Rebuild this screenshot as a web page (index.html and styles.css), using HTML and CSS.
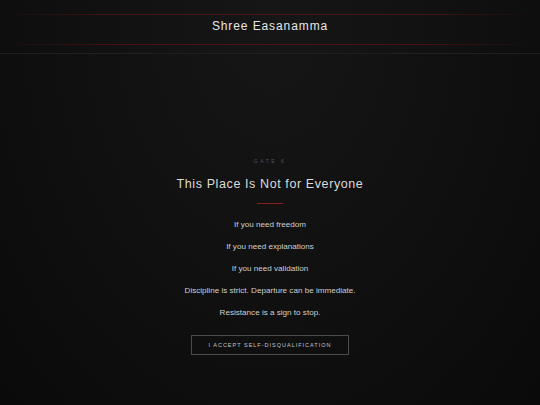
FILE: index.html
```html
<!DOCTYPE html>
<html lang="en">
<head>
  <meta charset="UTF-8" />
  <title>Shree Easanamma — Gate 6</title>
  <link rel="stylesheet" href="styles.css">
</head>
<body>
  <header class="site-header">
    <div class="brand">Shree Easanamma</div>
  </header>

  <main class="gate">
    <p class="gate-label">Gate 6</p>
    <h1 class="gate-title">This Place Is Not for Everyone</h1>
    <div class="divider"></div>

    <ul class="conditions">
      <li>If you need freedom</li>
      <li>If you need explanations</li>
      <li>If you need validation</li>
      <li>Discipline is strict. Departure can be immediate.</li>
      <li>Resistance is a sign to stop.</li>
    </ul>

    <button class="accept-btn">I accept self-disqualification</button>
  </main>
</body>
</html>
```

FILE: styles.css
```css
html, body {
  margin: 0;
  padding: 0;
  height: 100%;
}

body {
  font-family: 'Liberation Sans', Arial, sans-serif;
  background: radial-gradient(ellipse at 50% 5%, #161616 0%, #111111 45%, #0a0a0a 100%);
  color: #ddd;
}

.site-header {
  padding: 14px 0 8px;
  border-bottom: 1px solid #1f1f1f;
}

.brand {
  position: relative;
  height: 31px;
  line-height: 24px;
  text-align: center;
  font-size: 12px;
  letter-spacing: 0.9px;
  color: #e6e6e6;
}

/* red rules above and below the name, fading at both ends */
.brand::before,
.brand::after {
  content: "";
  position: absolute;
  left: 0;
  right: 0;
  height: 1px;
  background: linear-gradient(to right, rgba(80, 16, 16, 0), #431212 20%, #4c1414 50%, #431212 80%, rgba(80, 16, 16, 0));
}

.brand::before { top: 0; }
.brand::after { bottom: 0; }

.gate {
  display: flex;
  flex-direction: column;
  align-items: center;
  padding-top: 104px;
}

.gate-label {
  margin: 0;
  font-size: 5px;
  letter-spacing: 2.5px;
  text-transform: uppercase;
  color: #555;
}

.gate-title {
  margin: 13px 0 0;
  font-size: 12.5px;
  font-weight: normal;
  letter-spacing: 0.6px;
  color: #dcdcdc;
}

.divider {
  width: 26px;
  height: 1px;
  margin-top: 12px;
  background: #8a1d1d;
}

.conditions {
  list-style: none;
  margin: 10px 0 0;
  padding: 0;
  text-align: center;
}

.conditions li {
  font-size: 8.1px;
  line-height: 22px;
  color: #cfcfcf;
}

.accept-btn {
  margin-top: 11px;
  width: 158px;
  height: 20px;
  padding: 0;
  background: transparent;
  border: 1px solid #4a4a4a;
  color: #c4c4c4;
  font-family: inherit;
  font-size: 5.5px;
  letter-spacing: 1px;
  text-transform: uppercase;
  cursor: pointer;
}
```
